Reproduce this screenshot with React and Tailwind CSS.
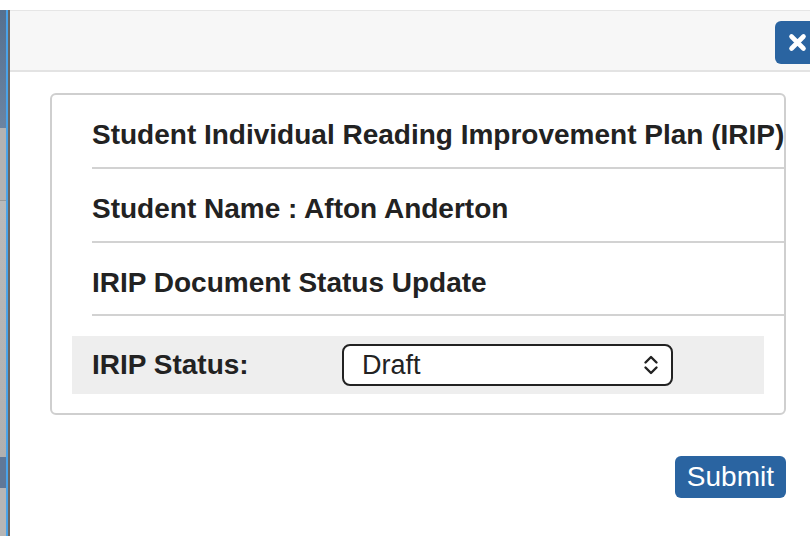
import { useState } from "react";

function CloseIcon() {
  return (
    <svg width="19" height="19" viewBox="0 0 19 19" fill="none">
      <path d="M3.5 3.5L15.5 15.5M15.5 3.5L3.5 15.5" stroke="#fff" strokeWidth="4.6" strokeLinecap="round" />
    </svg>
  );
}

function UpDownIcon() {
  return (
    <svg width="16" height="22" viewBox="0 0 16 22" fill="none">
      <path d="M2.5 8.5L8 3L13.5 8.5" stroke="#222" strokeWidth="2.4" strokeLinecap="round" strokeLinejoin="round" />
      <path d="M2.5 13.5L8 19L13.5 13.5" stroke="#222" strokeWidth="2.4" strokeLinecap="round" strokeLinejoin="round" />
    </svg>
  );
}

// page behind the modal, only a sliver of it shows on the left
function BackdropStrip() {
  return (
    <div className="flex w-[10px] shrink-0">
      <div className="flex w-[6px] flex-col">
        <div className="h-[118px] bg-gradient-to-b from-[#55708f] to-[#6b84a2]" />
        <div className="h-[72px] bg-[#b3b3b3]" />
        <div className="h-px bg-[#9a9a9a]" />
        <div className="h-[256px] bg-gradient-to-b from-[#bababa] to-[#b0b0b0]" />
        <div className="h-[31px] bg-[#5f7898]" />
        <div className="flex-1 bg-[#b6b6b6]" />
      </div>
      <div className="w-[2px] bg-[#4aa3e9]" />
      <div className="w-[2px] bg-[#666]" />
    </div>
  );
}

export default function App() {
  const [status] = useState("Draft");
  const rows = [
    "Student Individual Reading Improvement Plan (IRIP)",
    "Student Name : Afton Anderton",
    "IRIP Document Status Update",
  ];

  return (
    <div className="h-[536px] w-[810px] overflow-hidden bg-white pt-[10px] font-['Liberation_Sans',Arial,sans-serif] text-[#222]">
      <div className="flex h-[526px]">
        <BackdropStrip />
        <div className="flex-1 overflow-hidden bg-white">
          <div className="flex h-[62px] justify-end border-t border-b-2 border-t-[#e6e6e6] border-b-[#e3e3e3] bg-[#f7f7f7] pt-[10px]">
            <button className="-mr-[10px] flex h-[43px] w-[45px] items-center justify-center rounded-[6px] bg-[#2a64a1]">
              <CloseIcon />
            </button>
          </div>

          <div className="ml-[40px] mt-[21px] w-[736px] rounded-[6px] border-2 border-[#cfcfcf] pb-[19px]">
            {rows.map((text) => (
              <div key={text} className="ml-[40px] border-b-2 border-[#d2d2d2] pt-[25px] pb-4">
                <h3 className="whitespace-nowrap text-[28px] font-bold leading-[1.1]">{text}</h3>
              </div>
            ))}
            <div className="mx-[20px] mt-[20px] flex h-[58px] items-center bg-[#eeeeee] pl-[20px]">
              <span className="w-[250px] text-[28px] font-bold">IRIP Status:</span>
              <div className="flex h-[42px] w-[331px] items-center justify-between rounded-[8px] border-2 border-[#222] bg-white pl-[18px] pr-[12px]">
                <span className="text-[27px] leading-none">{status}</span>
                <UpDownIcon />
              </div>
            </div>
          </div>

          <div className="ml-[40px] mt-[41px] flex w-[736px] justify-end">
            <button className="h-[42px] rounded-[6px] bg-[#2a64a1] px-[12px] text-[28px] leading-none text-white">
              Submit
            </button>
          </div>
        </div>
      </div>
    </div>
  );
}
